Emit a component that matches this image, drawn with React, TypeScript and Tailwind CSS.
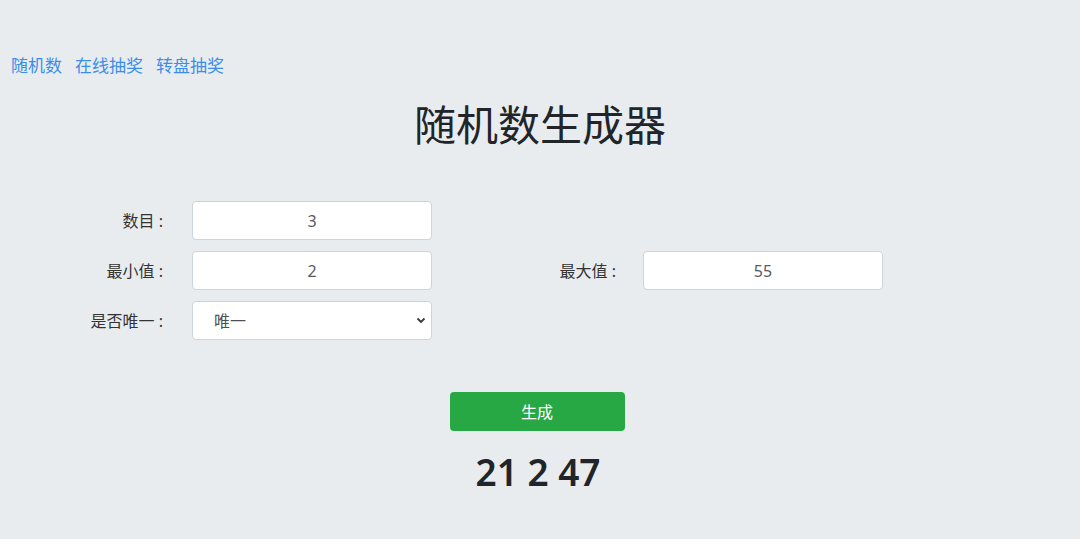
import React from "react";

const FONT = {
  fontFamily: '"Noto Sans", "Noto Sans CJK SC", sans-serif',
};

const NAV = ["随机数", "在线抽奖", "转盘抽奖"];

const Field = ({ value }: { value: string }) => (
  <input
    readOnly
    value={value}
    className="h-[39px] w-[240px] rounded-[4px] border border-[#ced4da] bg-white text-center text-[16px] text-[#555b61] outline-none"
  />
);

const App = () => {
  return (
    <div style={FONT} className="min-h-[539px] w-full bg-[#e9ecef] text-[#212529]">
      {/* top links */}
      <nav className="flex gap-[13px] pl-[11px] pt-[54px] text-[17px] leading-[24px] text-[#3b8ee8]">
        {NAV.map((n) => (
          <a key={n} href="#" className="hover:underline">
            {n}
          </a>
        ))}
      </nav>

      <h1 className="mt-[19px] text-center text-[42px] leading-[56px] font-normal">
        随机数生成器
      </h1>

      {/* form */}
      <div className="mt-[48px] grid grid-cols-[192px_240px_211px_240px] items-center gap-y-[11px] text-[16px] text-[#333]">
        <label className="pr-[29px] text-right">数目 :</label>
        <Field value="3" />
        <div />
        <div />

        <label className="pr-[29px] text-right">最小值 :</label>
        <Field value="2" />
        <label className="pr-[27px] text-right">最大值 :</label>
        <Field value="55" />

        <label className="pr-[29px] text-right">是否唯一 :</label>
        <div className="relative h-[39px] w-[240px]">
          <select className="h-full w-full appearance-none rounded-[4px] border border-[#ced4da] bg-white pl-[21px] text-[16px] text-[#495057] outline-none">
            <option>唯一</option>
            <option>不唯一</option>
          </select>
          <svg
            className="pointer-events-none absolute right-[6px] top-[15px]"
            width="10"
            height="8"
            viewBox="0 0 10 8"
          >
            <path d="M1.5 2.5 L5 6 L8.5 2.5" fill="none" stroke="#343a40" strokeWidth="1.8" />
          </svg>
        </div>
        <div />
        <div />
      </div>

      <div className="mt-[52px] flex justify-center">
        <button className="ml-[-6px] h-[39px] w-[175px] rounded-[4px] bg-[#28a745] text-[16px] text-white">
          生成
        </button>
      </div>

      <div className="ml-[-4px] mt-[17px] text-center text-[37px] leading-[48px] font-semibold text-[#212529]">
        21 2 47
      </div>
    </div>
  );
};

export default App;
